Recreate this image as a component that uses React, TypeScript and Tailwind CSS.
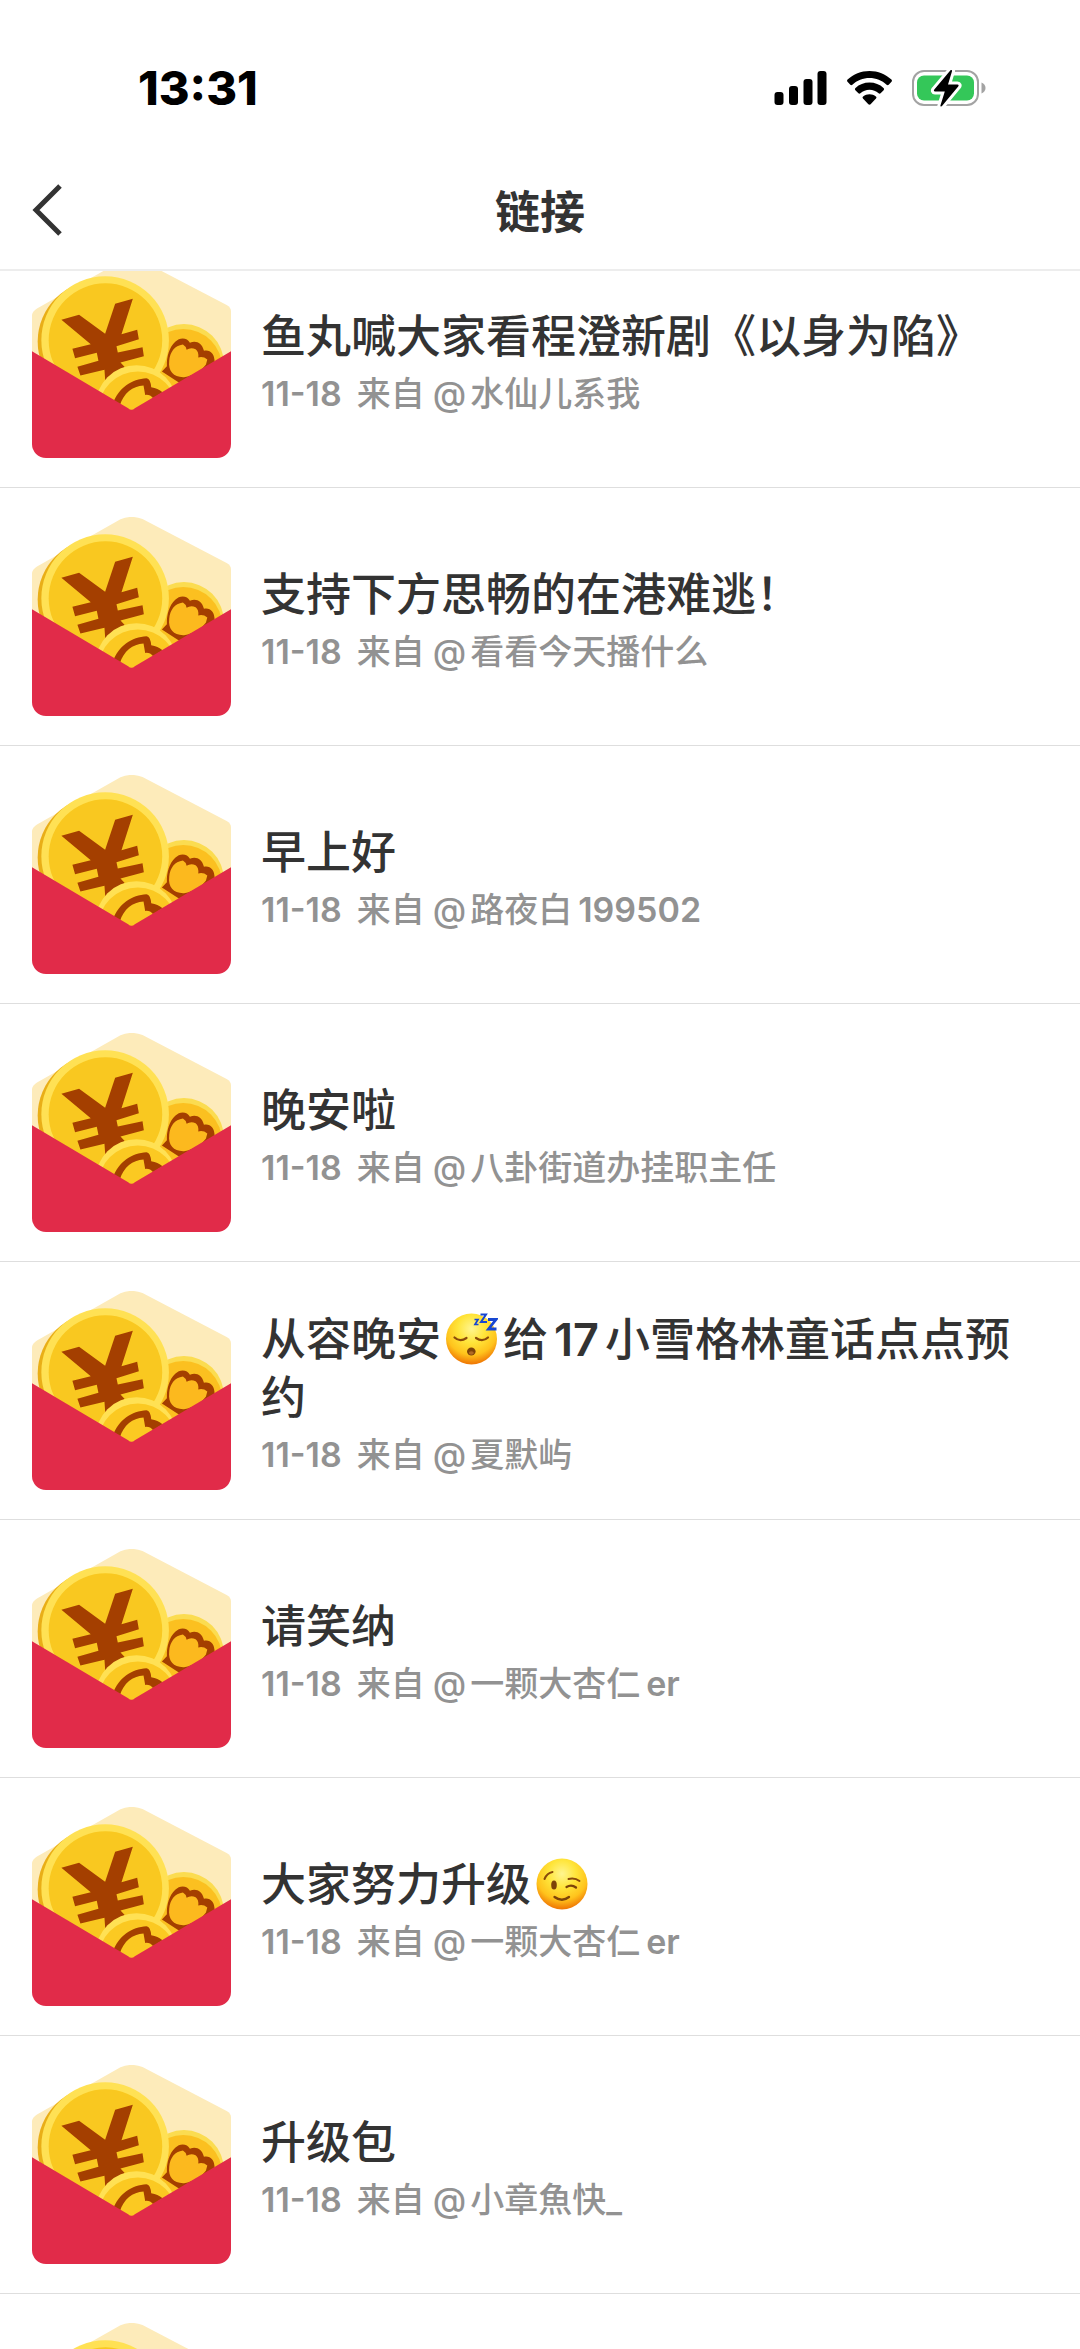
type Emoji = 'sleeping' | 'winking';
type Part = string | { emoji: Emoji };

interface LinkItem {
  title: Part[];
  date: string;
  author: string;
}

const items: LinkItem[] = [
  { title: ['鱼丸喊大家看程澄新剧《以身为陷》'], date: '11-18', author: '水仙儿系我' },
  { title: ['支持下方思畅的在港难逃！'], date: '11-18', author: '看看今天播什么' },
  { title: ['早上好'], date: '11-18', author: '路夜白199502' },
  { title: ['晚安啦'], date: '11-18', author: '八卦街道办挂职主任' },
  { title: ['从容晚安', { emoji: 'sleeping' }, '给17小雪格林童话点点预约'], date: '11-18', author: '夏默屿' },
  { title: ['请笑纳'], date: '11-18', author: '一颗大杏仁er' },
  { title: ['大家努力升级', { emoji: 'winking' }], date: '11-18', author: '一颗大杏仁er' },
  { title: ['升级包'], date: '11-18', author: '小章魚快_' },
];

function SignalIcon() {
  return (
    <svg className="h-[34px] w-[53px]" viewBox="0 0 53 34" aria-hidden="true">
      <rect x="0.5" y="21" width="9" height="13" rx="3" />
      <rect x="15" y="15" width="9" height="19" rx="3" />
      <rect x="29.5" y="8" width="9" height="26" rx="3" />
      <rect x="43.5" y="0" width="9" height="34" rx="3" />
    </svg>
  );
}

function WifiIcon() {
  return (
    <svg className="h-[34px] w-[45px]" viewBox="0 0 45 34" aria-hidden="true">
      <path d="M22.5 0C31 0 38.6 3.200 44.400 8.600c.7.7.7 1.500.1 2.200l-2.800 2.900c-.6.6-1.400.6-2.100 0C35 9.400 29 7 22.500 7S10 9.400 5.400 13.700c-.7.6-1.500.6-2.100 0L.5 10.800c-.6-.7-.6-1.500.1-2.200C6.400 3.200 14 0 22.500 0Z" />
      <path d="M22.500 11.600c5.400 0 10.300 2 14 5.400.7.7.7 1.500.1 2.200l-3 3c-.6.6-1.400.6-2 .1-2.500-2.200-5.700-3.600-9.100-3.600s-6.600 1.400-9.100 3.600c-.6.5-1.400.5-2-.1l-3-3c-.6-.7-.6-1.500.1-2.200 3.700-3.400 8.600-5.400 14-5.400Z" />
      <path d="M22.500 23.200c2.400 0 4.600.8 6.400 2.300.7.6.7 1.400.1 2.100l-5.400 5.700c-.6.6-1.600.6-2.200 0L16 27.600c-.6-.7-.6-1.500.1-2.100 1.800-1.500 4-2.300 6.400-2.300Z" />
    </svg>
  );
}

function BatteryIcon() {
  const bolt = 'M38.500 .3C39.300 -.6 40.300 .1 40 1.200L36 14.500H45.500C46.600 14.500 47 15.500 46.200 16.400L30 36C29.200 36.900 28.100 36.300 28.500 35.200L32.800 21.500H23C21.900 21.500 21.500 20.500 22.300 19.600Z';
  return (
    <svg className="h-[38px] w-[74px]" viewBox="0 -1 74 38" role="img" aria-label="充电中">
      <rect x="1" y="1" width="65" height="34" rx="11" fill="none" stroke="#a3a3a3" strokeWidth="2" />
      <path d="M69.500 12.500c2.600 1 4 3 4 5.500s-1.400 4.500-4 5.500Z" fill="#a3a3a3" />
      <rect x="5" y="5.500" width="57" height="25" rx="7" fill="#34c759" />
      <path d={bolt} fill="#fff" stroke="#fff" strokeWidth="6" strokeLinejoin="round" />
      <path d={bolt} fill="#000" />
    </svg>
  );
}

function RedPacket() {
  return (
    <svg className="h-[199px] w-[199px] shrink-0 rounded-[14px]" viewBox="37 53 596 596" aria-hidden="true">
      <path d="M37 220Q39 209 52 201L302 60Q334 46 368 59L620 191Q633 198 633 210V420H37Z" fill="#fdebba" />
      <circle cx="492" cy="368" r="120" fill="#fbdc50" />
      <circle cx="490" cy="380" r="117" fill="#fbc020" />
      <path
        d="M426 390L441 374C440 345 448 318 466 301C480 286 502 288 510 304C528 296 546 304 552 328C570 324 584 336 584 362L560 400L478 424Z"
        fill="#a43f00"
      />
      <path
        d="M448 358C450 332 464 312 489 309Q497 313 500 325Q512 317 527 323Q537 330 535 348Q550 344 562 354L558 369C546 386 524 402 492 407C462 408 444 390 448 358Z"
        fill="#fcb91e"
      />
      <ellipse cx="240" cy="300" rx="186" ry="184" fill="#e9ae17" />
      <ellipse cx="256" cy="296" rx="191" ry="191" fill="#ffe154" />
      <ellipse cx="257" cy="296" rx="170" ry="170" fill="#f9c820" />
      <path
        d="M125 235L178 220L256 277L286 187L339 172L305 278L352 265L357 293L290 314L294 333L368 317L372 344L302 363L314 376L258 440L254 385L182 402L173 376L236 358L231 334L166 350L158 322L213 308Z"
        fill="#a43f00"
      />
      <circle cx="350" cy="494" r="123" fill="#ffe154" />
      <circle cx="354" cy="508" r="118" fill="#fbc922" />
      <path
        d="M280 484C296 440 336 412 380 410Q392 412 394 437Q414 440 428 452L400 470Q390 458 376 460L371 432C338 434 312 454 300 492Z"
        fill="#a43f00"
      />
      <path d="M37 329L325 500Q335 509 345 500L633 329V649H37Z" fill="#e12b49" />
    </svg>
  );
}

function FaceShading({ id }: { id: string }) {
  return (
    <radialGradient id={id} cx="50%" cy="30%" r="68%">
      <stop offset="0" stopColor="#fff590" />
      <stop offset="0.4" stopColor="#ffe53a" />
      <stop offset="0.75" stopColor="#ffc31c" />
      <stop offset="1" stopColor="#f07c06" />
    </radialGradient>
  );
}

function EmojiIcon({ kind }: { kind: Emoji }) {
  if (kind === 'sleeping') {
    return (
      <svg className="mx-[5px] inline-block h-[52px] w-[52px] align-[-9px]" viewBox="0 0 52 52" role="img" aria-label="😴">
        <defs>
          <FaceShading id="face-sleeping" />
        </defs>
        <circle cx="25.500" cy="26" r="25.500" fill="url(#face-sleeping)" />
        <path d="M8.500 24.500q5.500 5 12 .5M30 25q6.500 4.500 12-.5" fill="none" stroke="#8a4a0a" strokeWidth="2.200" strokeLinecap="round" />
        <ellipse cx="25.300" cy="38.500" rx="4.300" ry="4" fill="#7d4308" />
        <ellipse cx="25.300" cy="40" rx="2.500" ry="1.800" fill="#b06a25" />
        <g fill="none" stroke="#1746d1">
          <path d="M28.500 6.500h3.500l-3 5h3.500" strokeWidth="1.700" />
          <path d="M34.500 1.500h5.500l-5 7.500h6" strokeWidth="2" />
          <path d="M42 6.500h8l-7.500 9.500h8" strokeWidth="2.800" />
        </g>
      </svg>
    );
  }
  return (
    <svg className="mx-[5px] inline-block h-[52px] w-[52px] align-[-9px]" viewBox="0 0 52 52" role="img" aria-label="😉">
      <defs>
        <FaceShading id="face-winking" />
      </defs>
      <circle cx="26" cy="26" r="25.500" fill="url(#face-winking)" />
      <path d="M8.500 21q2.500-6 8-7M32.500 21q6.500-1.500 11 2" fill="none" stroke="#8a4a0a" strokeWidth="2" strokeLinecap="round" />
      <ellipse cx="18" cy="27" rx="2.800" ry="4.600" fill="#7d4308" />
      <path d="M30.500 29q5-3 9.500.5M18.500 39q7.500 5.500 14.500 0" fill="none" stroke="#7d4308" strokeWidth="2.300" strokeLinecap="round" />
    </svg>
  );
}

/* Latin letters and digits are set one weight heavier than the Chinese around them. */
function MixedText({ text }: { text: string }) {
  return (
    <>
      {text.split(/([A-Za-z0-9]+)/).map((run, i) =>
        i % 2 === 1 ? (
          <span key={i} className="mx-1.5 font-semibold">
            {run}
          </span>
        ) : (
          run
        )
      )}
    </>
  );
}

function LinkRow({ item }: { item?: LinkItem }) {
  return (
    <li className="border-b border-[#dedede]">
      <a href="#" className="flex items-center gap-[30px] py-[29px] pr-9 pl-8">
        <RedPacket />
        {item && (
          <div className="min-w-0 flex-1 pt-2">
            <h2 className="text-[45px] leading-[58px] font-medium text-[#333]">
              {item.title.map((part, i) =>
                typeof part === 'string' ? <MixedText key={i} text={part} /> : <EmojiIcon key={i} kind={part.emoji} />
              )}
            </h2>
            <p className="mt-1 text-[34px] leading-[48px] font-medium text-[#929292]">
              <span className="mr-1.5 font-semibold">{item.date}</span> 来自
              <span className="mr-1 ml-2">@</span>
              <MixedText text={item.author} />
            </p>
          </div>
        )}
      </a>
    </li>
  );
}

export default function App() {
  return (
    <div
      lang="zh-CN"
      className="flex h-screen flex-col overflow-hidden bg-white font-['Inter','Noto_Sans_CJK_SC',sans-serif]"
    >
      <div className="flex h-[150px] shrink-0 items-center justify-between pt-[25px] pr-[94px] pl-[138px] text-black">
        <time className="text-[47px] leading-none font-extrabold">13:31</time>
        <div className="flex items-center gap-5">
          <SignalIcon />
          <WifiIcon />
          <BatteryIcon />
        </div>
      </div>
      <header className="grid h-[121px] shrink-0 grid-cols-[1fr_auto_1fr] items-center border-b-2 border-[#ededed] px-8">
        <button type="button" aria-label="返回" className="flex h-20 w-20 items-center">
          <svg className="h-[52px] w-[30px]" viewBox="0 0 30 52" aria-hidden="true">
            <path d="M28 2L4 26L28 50" fill="none" stroke="#333" strokeWidth="5" />
          </svg>
        </button>
        <h1 className="pt-1.5 text-[45px] leading-[60px] font-bold text-[#333]">链接</h1>
      </header>
      <main className="min-h-0 flex-1 overflow-hidden">
        <ul className="-mt-[41px]">
          {items.map((item, i) => (
            <LinkRow key={i} item={item} />
          ))}
          <LinkRow />
        </ul>
      </main>
    </div>
  );
}
